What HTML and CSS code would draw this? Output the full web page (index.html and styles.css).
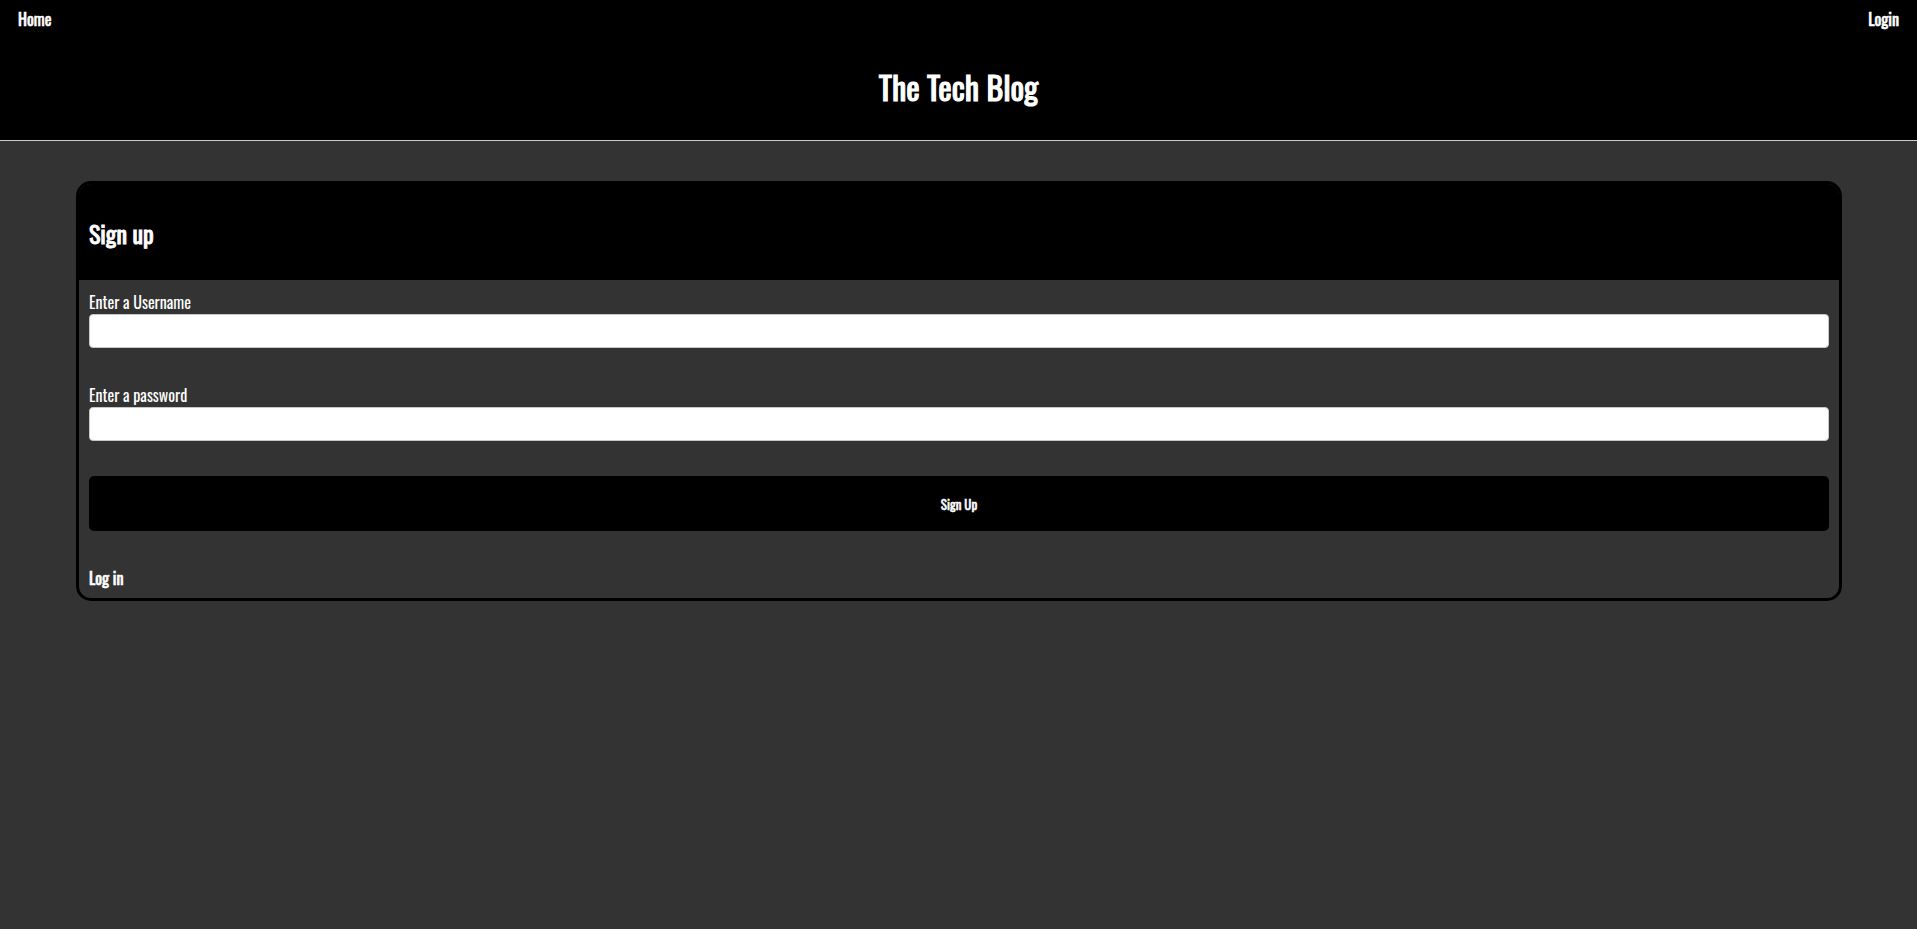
FILE: index.html
```html
<!DOCTYPE html>
<html lang="en">
<head>
<meta charset="utf-8">
<title>The Tech Blog</title>
<link rel="stylesheet" href="styles.css">
</head>
<body>
<header class="site-header">
  <nav class="nav">
    <a class="nav-link" href="#">Home</a>
    <a class="nav-link" href="#">Login</a>
  </nav>
  <h1 class="site-title">The Tech Blog</h1>
</header>
<main class="main">
  <section class="card">
    <div class="card-header">
      <h2 class="card-title">Sign up</h2>
    </div>
    <form class="card-body">
      <div class="field">
        <label class="field-label" for="username">Enter a Username</label>
        <input class="field-input" id="username" type="text">
      </div>
      <div class="field">
        <label class="field-label" for="password">Enter a password</label>
        <input class="field-input" id="password" type="password">
      </div>
      <button class="btn" type="button">Sign Up</button>
      <a class="login-link" href="#">Log in</a>
    </form>
  </section>
</main>
</body>
</html>
```
FILE: styles.css
```css
* { box-sizing: border-box; }

html, body {
  margin: 0;
  padding: 0;
}

body {
  background: #333333;
  color: #ffffff;
  font-family: "Oswald", "Open Sans", "Liberation Sans", sans-serif;
  min-height: 100vh;
}

.site-header {
  background: #000000;
  border-bottom: 1px solid #cccccc;
  height: 141px;
  display: flex;
  flex-direction: column;
}

.nav {
  display: flex;
  justify-content: space-between;
  padding: 9px 18px 0;
}

.nav-link {
  color: #ffffff;
  text-decoration: none;
  font-weight: 400;
  -webkit-text-stroke: 0.62px #ffffff;
  font-size: 16px;
  line-height: 20px;
}

.site-title {
  margin: 38px 0 0;
  text-align: center;
  font-size: 32px;
  line-height: 40px;
  font-weight: 400;
  -webkit-text-stroke: 1.05px #ffffff;
}

.main {
  padding-top: 40px;
}

.card {
  margin: 0 75px 0 76px;
  border: 3px solid #000000;
  border-radius: 15px;
  overflow: hidden;
  background: #333333;
}

.card-header {
  background: #000000;
  padding: 34px 10px 32px;
}

.card-title {
  margin: 0;
  font-size: 24px;
  line-height: 30px;
  font-weight: 400;
  -webkit-text-stroke: 0.86px #ffffff;
}

.card-body {
  display: flex;
  flex-direction: column;
  padding: 12px 10px 10px;
}

.field {
  display: flex;
  flex-direction: column;
  margin-bottom: 37px;
}

.field + .field {
  margin-bottom: 35px;
}

.field-label {
  font-size: 16px;
  line-height: 20px;
  font-weight: 400;
  margin-bottom: 2px;
}

.field-input {
  height: 34px;
  background: #ffffff;
  border: 1px solid #c8c8c8;
  border-radius: 4px;
  padding: 0 8px;
  font: inherit;
}

.btn {
  height: 55px;
  background: #000000;
  color: #ffffff;
  border: none;
  border-radius: 5px;
  font-family: inherit;
  font-size: 13px;
  font-weight: 400;
  -webkit-text-stroke: 0.52px #ffffff;
}

.login-link {
  margin-top: 37px;
  align-self: flex-start;
  color: #ffffff;
  text-decoration: none;
  font-size: 16px;
  line-height: 20px;
  font-weight: 400;
  -webkit-text-stroke: 0.62px #ffffff;
}
```
